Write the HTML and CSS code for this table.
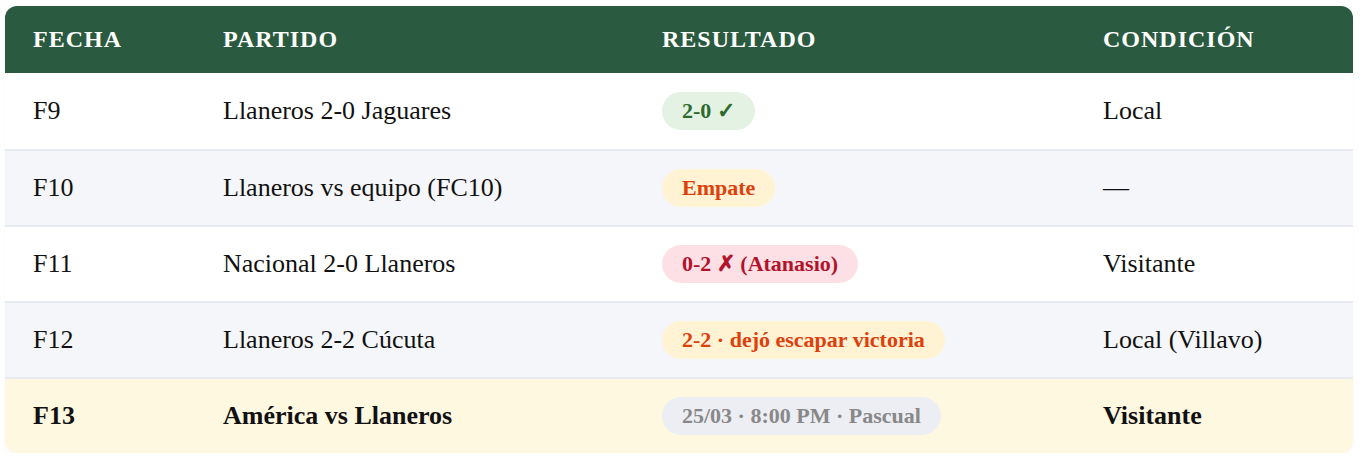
FILE: index.html
```html
<!DOCTYPE html>
<html lang="es">
<head>
<meta charset="utf-8">
<link rel="stylesheet" href="styles.css">
</head>
<body>
<div class="wrap">
<table class="fixture">
  <colgroup>
    <col class="c-fecha"><col class="c-partido"><col class="c-res"><col class="c-cond">
  </colgroup>
  <thead>
    <tr><th>Fecha</th><th>Partido</th><th>Resultado</th><th>Condición</th></tr>
  </thead>
  <tbody>
    <tr><td>F9</td><td>Llaneros 2-0 Jaguares</td><td><span class="badge win">2-0 ✓</span></td><td>Local</td></tr>
    <tr class="alt"><td>F10</td><td>Llaneros vs equipo (FC10)</td><td><span class="badge draw">Empate</span></td><td>—</td></tr>
    <tr><td>F11</td><td>Nacional 2-0 Llaneros</td><td><span class="badge loss">0-2 ✗ (Atanasio)</span></td><td>Visitante</td></tr>
    <tr class="alt"><td>F12</td><td>Llaneros 2-2 Cúcuta</td><td><span class="badge draw">2-2 · dejó escapar victoria</span></td><td>Local (Villavo)</td></tr>
    <tr class="next"><td>F13</td><td>América vs Llaneros</td><td><span class="badge pending">25/03 · 8:00 PM · Pascual</span></td><td>Visitante</td></tr>
  </tbody>
</table>
</div>
</body>
</html>
```

FILE: styles.css
```css
html, body { margin: 0; padding: 0; background: #fff; }
body { font-family: "Liberation Serif", "Times New Roman", serif; color: #111; }
.wrap { padding: 6px 11px 0 5px; }
.fixture {
  width: 1348px;
  border-collapse: separate;
  border-spacing: 0;
  border-radius: 12px;
  overflow: hidden;
  box-shadow: 0 1px 3px rgba(0,0,0,0.04);
}
.c-fecha { width: 190px; }
.c-partido { width: 439px; }
.c-res { width: 441px; }
.c-cond { width: 278px; }
.fixture th {
  background: #2a5a40;
  color: #fff;
  text-align: left;
  font-weight: bold;
  text-transform: uppercase;
  font-size: 24px;
  letter-spacing: 1px;
  height: 67px;
  padding: 0 0 0 28px;
  box-sizing: border-box;
}
.fixture td {
  font-size: 26px;
  height: 76px;
  padding: 0 0 0 28px;
  box-sizing: border-box;
  border-top: 2px solid #e7eaf1;
  vertical-align: middle;
}
.fixture tbody tr:first-child td { border-top: none; height: 76px; }
.fixture tr.alt td { background: #f5f6fa; }
.fixture tr.next td { background: #fef8e1; font-weight: bold; }
.badge {
  display: inline-block;
  font-weight: bold;
  font-size: 22px;
  line-height: 38px;
  height: 38px;
  padding: 0 20px;
  border-radius: 19px;
  vertical-align: middle;
}
.win { background: #e3f2e3; color: #2e6a2e; }
.draw { background: #fff3d4; color: #de400c; }
.loss { background: #fde0e5; color: #b3122b; }
.pending { background: #eceef3; color: #888; }
```
